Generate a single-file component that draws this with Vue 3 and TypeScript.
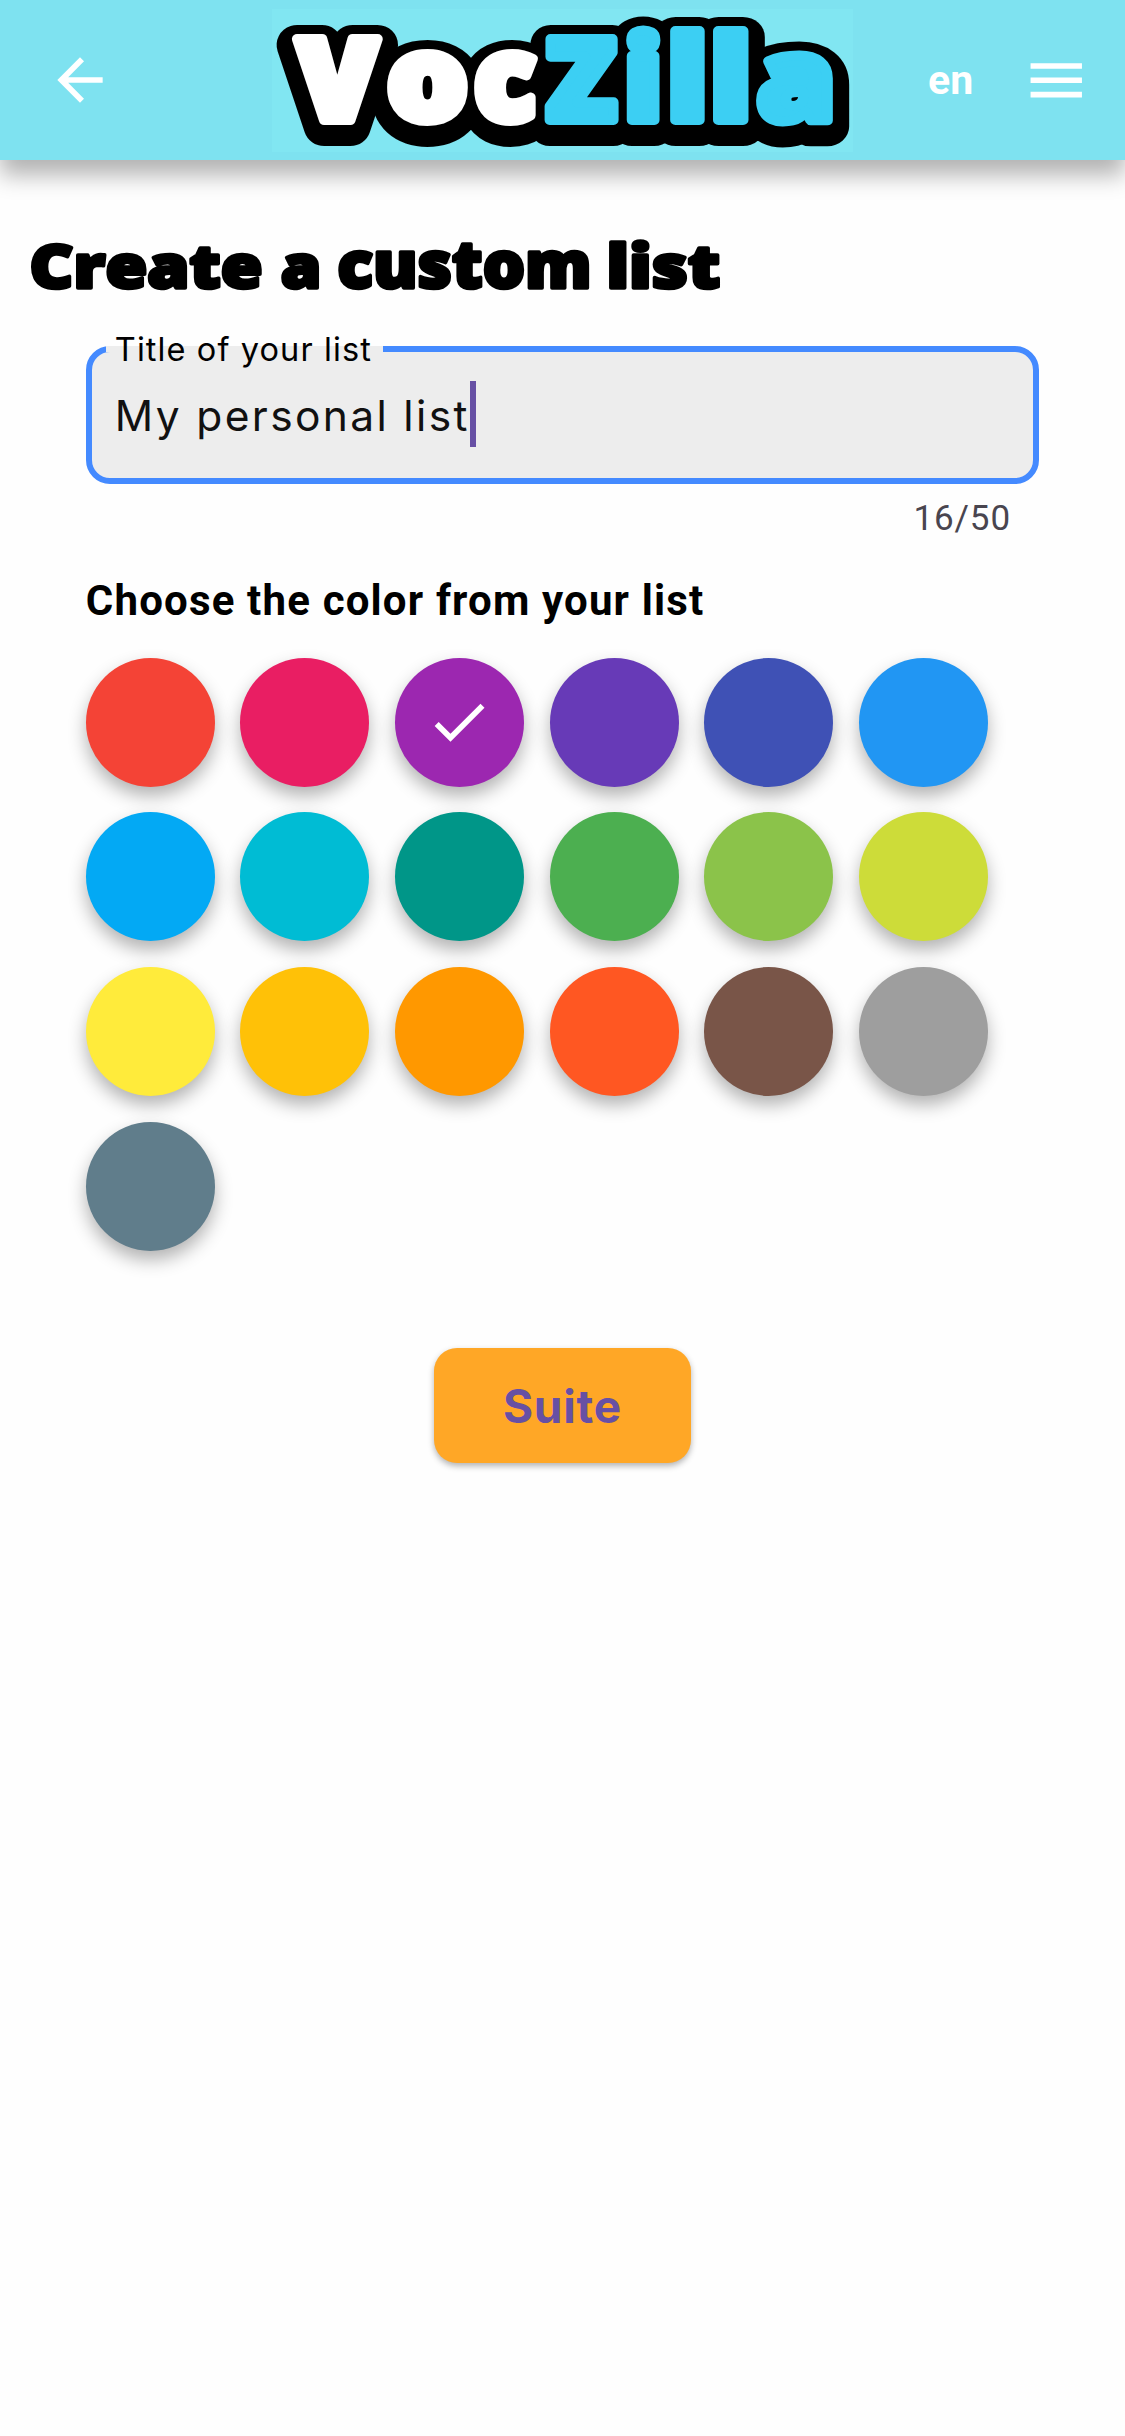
<script setup lang="ts">
import { ref } from 'vue'

interface Box {
  text: string
  left: number
  right: number
  top: number
  bottom: number
  fill: string
}
interface Fitted {
  text: string
  fill: string
  size: number
  transform: string
}

const DISPLAY_FONT = '"Open Sans", sans-serif'
const context = document.createElement('canvas').getContext('2d')!

// Scales a piece of display lettering so that its ink fills the given box.
function fit(box: Box, stroke: number): Fitted {
  context.font = `800 200px ${DISPLAY_FONT}`
  const m = context.measureText(box.text)
  const inkHeight = (m.actualBoundingBoxAscent + m.actualBoundingBoxDescent) / 200
  const inkWidth = (m.actualBoundingBoxLeft + m.actualBoundingBoxRight) / 200
  const size = (box.bottom - box.top - stroke) / inkHeight
  const stretch = (box.right - box.left) / (inkWidth * size + stroke)
  const x = box.left + stretch * (stroke / 2 + (m.actualBoundingBoxLeft / 200) * size)
  const y = box.bottom - stroke / 2 - (m.actualBoundingBoxDescent / 200) * size
  return { text: box.text, fill: box.fill, size, transform: `translate(${x} ${y}) scale(${stretch} 1)` }
}

const white = '#ffffff'
const blue = '#3ccff3'
const logo = [
  { text: 'V', left: 20, right: 111, top: 24, bottom: 116, fill: white },
  { text: 'o', left: 115, right: 196, top: 40, bottom: 117, fill: white },
  { text: 'c', left: 202, right: 266, top: 40, bottom: 117, fill: white },
  { text: 'Z', left: 272, right: 347, top: 24, bottom: 116, fill: blue },
  { text: 'i', left: 354, right: 389, top: 16, bottom: 116, fill: blue },
  { text: 'l', left: 398, right: 433, top: 16, bottom: 116, fill: blue },
  { text: 'l', left: 441, right: 477, top: 16, bottom: 116, fill: blue },
  { text: 'a', left: 484, right: 561, top: 40, bottom: 117, fill: blue },
].map((b) => fit(b, 10))

const heading = [
  { text: 'Create', left: 31, right: 262, top: 12.5, bottom: 60, fill: '#000' },
  { text: 'a', left: 281, right: 319, top: 22, bottom: 60, fill: '#000' },
  { text: 'custom', left: 338, right: 589.5, top: 12.5, bottom: 60, fill: '#000' },
  { text: 'list', left: 609, right: 720, top: 9.5, bottom: 60, fill: '#000' },
].map((b) => fit(b, 3.5))

const title = ref('My personal list')
const selected = ref(2)
const colors = [
  '#f44336', '#e91e63', '#9c27b0', '#673ab7', '#3f51b5', '#2196f3',
  '#03a9f4', '#00bcd4', '#009688', '#4caf50', '#8bc34a', '#cddc39',
  '#ffeb3b', '#ffc107', '#ff9800', '#ff5722', '#795548', '#9e9e9e',
  '#607d8b',
]
</script>

<template>
  <div class="page">
    <header class="bar">
      <svg class="back" viewBox="0 0 24 24"><path d="M20 11H7.83l5.59-5.59L12 4l-8 8 8 8 1.41-1.41L7.83 13H20z" /></svg>
      <svg class="logo" viewBox="0 0 581 143" width="581" height="143">
        <ellipse cx="155.5" cy="80" rx="14" ry="26" />
        <g transform="translate(0 6)" class="logo-shadow">
          <text v-for="(l, i) in logo" :key="i" :font-size="l.size" :transform="l.transform">{{ l.text }}</text>
        </g>
        <g class="logo-face">
          <text v-for="(l, i) in logo" :key="i" :font-size="l.size" :transform="l.transform" :fill="l.fill" :stroke="l.fill">{{ l.text }}</text>
        </g>
      </svg>
      <span class="lang">en</span>
      <svg class="menu" viewBox="0 0 24 24"><path d="M3 18h18v-2H3zm0-5h18v-2H3zm0-7v2h18V6z" /></svg>
    </header>

    <h1 class="heading">
      <svg viewBox="0 0 1125 80" width="1125" height="80">
        <text v-for="w in heading" :key="w.text" :font-size="w.size" :transform="w.transform">{{ w.text }}</text>
      </svg>
    </h1>

    <main class="form">
      <div class="field">
        <label class="label">Title of your list</label>
        <span class="value">{{ title }}</span><i class="caret"></i>
      </div>
      <div class="counter">{{ title.length }}/50</div>
      <h2 class="sub">Choose the color from your list</h2>
      <div class="swatches">
        <button v-for="(c, i) in colors" :key="c" class="swatch" :style="{ background: c }" @click="selected = i">
          <svg v-if="i === selected" viewBox="0 0 24 24"><path d="M9 16.17L4.83 12l-1.42 1.41L9 19 21 7l-1.41-1.41z" /></svg>
        </button>
      </div>
      <button class="next">Suite</button>
    </main>
  </div>
</template>

<style>
body { background: #fefefe; }
</style>

<style scoped>
.page { width: 1125px; height: 2436px; background: #fefefe; overflow: hidden; font-family: Roboto, sans-serif; }
.bar {
  box-sizing: border-box;
  display: flex;
  align-items: center;
  height: 160px;
  padding-left: 46px;
  background: #7ee2f0;
  box-shadow: 0 15px 22px rgba(0, 0, 0, 0.3);
}
.back { width: 68px; height: 68px; fill: #fff; }
.logo { flex: none; margin-left: 158px; background: #81e6f2; }
.logo text, .heading text { font-family: "Open Sans", sans-serif; font-weight: 800; }
.logo-shadow text { fill: #000; stroke: #000; stroke-width: 40px; stroke-linejoin: round; }
.logo-face text { stroke-width: 10px; stroke-linejoin: round; }
.lang { width: 46px; margin-left: 75px; font-size: 41px; font-weight: 700; line-height: 48px; color: #fff; }
.menu { width: 68.5px; height: 68.5px; margin-left: 48px; fill: #fff; }
.heading { margin: 70px 0 0; height: 80px; }
.heading svg { display: block; }
.heading text { fill: #000; stroke: #000; stroke-width: 3.5px; stroke-linejoin: round; }
.form { display: flex; flex-direction: column; padding: 36px 86px 0 85.8px; }
.field {
  position: relative;
  box-sizing: border-box;
  display: flex;
  align-items: center;
  height: 138px;
  padding: 0 0 2px 23px;
  border: 6px solid #448aff;
  border-radius: 24px;
  background: #ededed;
  font-family: Inter, sans-serif;
}
.label {
  position: absolute;
  left: 14px;
  top: -6px;
  width: 268px;
  height: 6px;
  padding-left: 9px;
  background: #ededed;
  font-size: 32.5px;
  font-weight: 400;
  line-height: 8px;
  letter-spacing: 1.1px;
  white-space: nowrap;
  color: #000;
}
.value { padding-top: 3px; font-size: 42.5px; font-weight: 400; line-height: 63px; letter-spacing: 2.35px; color: #111; white-space: nowrap; }
.caret { width: 6px; height: 66px; background: #6750a4; }
.counter { margin: 13px 28px 0 0; font-size: 35px; line-height: 44px; letter-spacing: 0.9px; text-align: right; color: #49454f; }
.sub { margin: 34.5px 0 0; font-size: 42px; font-weight: 700; line-height: 50px; letter-spacing: 1.17px; color: #000; white-space: nowrap; }
.swatches { display: flex; flex-wrap: wrap; gap: 25.6px; margin-top: 32.3px; width: 920px; }
.swatch {
  display: flex;
  align-items: center;
  justify-content: center;
  width: 129px;
  height: 129px;
  padding: 0;
  border: 0;
  border-radius: 50%;
  box-shadow: 0 9px 18px rgba(0, 0, 0, 0.3);
}
.swatch svg { width: 68px; height: 68px; fill: #fff; }
.next {
  align-self: center;
  width: 257px;
  height: 115px;
  margin-top: 97px;
  padding: 2px 0 0;
  border: 0;
  border-radius: 23px;
  background: #ffa726;
  box-shadow: 0 3px 6px rgba(0, 0, 0, 0.3);
  font: 700 46px Inter, sans-serif;
  letter-spacing: 0.8px;
  color: #6750a4;
}
</style>
